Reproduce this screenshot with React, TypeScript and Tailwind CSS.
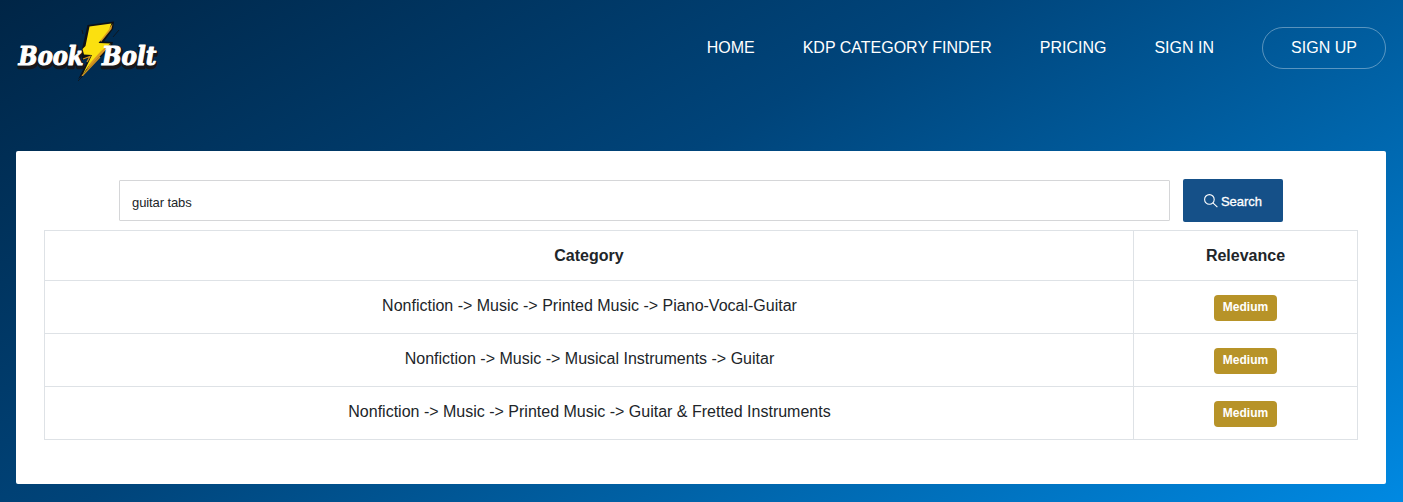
import React, { useState } from 'react';

interface CategoryResult {
  id: string;
  path: string;
  relevance: string;
}

const navLinks = ['HOME', 'KDP CATEGORY FINDER', 'PRICING', 'SIGN IN'];

const results: CategoryResult[] = [
  {
    id: '1',
    path: 'Nonfiction -> Music -> Printed Music -> Piano-Vocal-Guitar',
    relevance: 'Medium'
  },
  {
    id: '2',
    path: 'Nonfiction -> Music -> Musical Instruments -> Guitar',
    relevance: 'Medium'
  },
  {
    id: '3',
    path: 'Nonfiction -> Music -> Printed Music -> Guitar & Fretted Instruments',
    relevance: 'Medium'
  }
];

const Logo: React.FC = () => (
  <svg width="170" height="64" viewBox="0 0 170 64" className="block">
    <g
      fontFamily="'DejaVu Serif', serif"
      fontWeight="bold"
      fontStyle="italic"
      fontSize="26"
      strokeLinejoin="round"
    >
      <g fill="#15171c" stroke="#15171c" strokeWidth="4.6">
        <text x="4" y="46.5" textLength="64" lengthAdjust="spacingAndGlyphs">Book</text>
        <text x="87.5" y="46.5" textLength="53" lengthAdjust="spacingAndGlyphs">Bolt</text>
      </g>
      {/* bolt */}
      <g strokeLinejoin="miter">
        <path d="M71.5 5 L98 1.5 L97 9 L88 21.5 L97 22 L96 26 L84 38 L62 59.5 L73 38 L66 40 L66 29 Z" fill="#0d1016" />
        <path d="M85 22 L95.5 9 L96.5 4 L84 20 Z M95 24.5 L70 51 L78 36 L84 27 Z" fill="#d99a22" />
        <path d="M73.5 6.5 L95.5 3.5 L93 9.5 L82.5 23 L94.5 23.5 L85 31 L76 41 L66.5 55 L76 35 L68 34.5 L66.5 29 L69.5 26 Z" fill="#fbe010" />
        <path d="M67 39 L74 36.5 L71 42 M84 37 L66 56" stroke="#cf931f" strokeWidth="1.3" fill="none" />
        <path d="M97 17 L103 10 M62 61 L67 56 M66 10 L67 14" stroke="#0d1722" strokeWidth="1" />
      </g>
      <g fill="#ffffff" stroke="#ffffff" strokeWidth="1.1">
        <text x="2.5" y="45" textLength="65" lengthAdjust="spacingAndGlyphs">Book</text>
        <text x="86" y="45" textLength="54.5" lengthAdjust="spacingAndGlyphs">Bolt</text>
      </g>
    </g>
  </svg>
);

const SearchIcon: React.FC = () => (
  <svg width="14" height="14" viewBox="0 0 14 14" fill="none" stroke="currentColor" strokeWidth="1.1" className="-mt-0.5 block">
    <circle cx="5.4" cy="5.4" r="4.8" />
    <path d="M8.9 8.9 L13.4 13.2" />
  </svg>
);

const App: React.FC = () => {
  const [keyword, setKeyword] = useState('guitar tabs');

  return (
    <div className="h-[502px] w-full overflow-hidden bg-[linear-gradient(150deg,#002546_0%,#00447a_42%,#0063a8_68%,#0089e2_100%)] px-4 pt-5 font-['Liberation_Sans',Arial,sans-serif] text-[#212529]">
      <header className="flex h-[131px] items-start justify-between">
        <Logo />
        <nav className="mt-[7px] mr-px flex items-center gap-12 text-base text-white">
          {navLinks.map(link => (
            <a key={link} href="#">{link}</a>
          ))}
          <a href="#" className="flex h-[42px] w-[124px] items-center justify-center rounded-full border border-white/35">
            SIGN UP
          </a>
        </nav>
      </header>

      <main className="mr-px h-[333px] rounded-[2px] bg-white px-7 pt-7">
        <div className="flex h-[51px] items-start pl-[75px]">
          <input
            type="text"
            value={keyword}
            onChange={e => setKeyword(e.target.value)}
            className="mt-px h-[41px] w-[1051px] rounded-[1px] border border-[#d5d6d8] px-3 pt-1 text-[13px] tracking-[-0.1px] focus:outline-none"
          />
          <button className="ml-[13px] flex h-[43px] w-[100px] items-center justify-center gap-[3px] rounded-[2px] bg-[#155088] pt-0.5 text-[13px] text-white [-webkit-text-stroke:0.3px_white]">
            <SearchIcon />
            <span>Search</span>
          </button>
        </div>

        <table className="w-[1314px] table-fixed border-collapse text-center text-base">
          <colgroup>
            <col className="w-[1089px]" />
            <col />
          </colgroup>
          <thead>
            <tr className="h-[50px]">
              <th className="border border-[#dee2e6] p-0 font-bold">Category</th>
              <th className="border border-[#dee2e6] p-0 font-bold">Relevance</th>
            </tr>
          </thead>
          <tbody>
            {results.map(result => (
              <tr key={result.id} className="h-[53px]">
                <td className="border border-[#dee2e6] p-0 pb-[3px] pl-px">{result.path}</td>
                <td className="border border-[#dee2e6] p-0 pt-0.5">
                  <span className="mx-auto flex h-[26px] w-[63px] items-center justify-center rounded bg-[#b79328] pb-0.5 text-xs font-bold text-white">
                    {result.relevance}
                  </span>
                </td>
              </tr>
            ))}
          </tbody>
        </table>
      </main>
    </div>
  );
};

export default App;
